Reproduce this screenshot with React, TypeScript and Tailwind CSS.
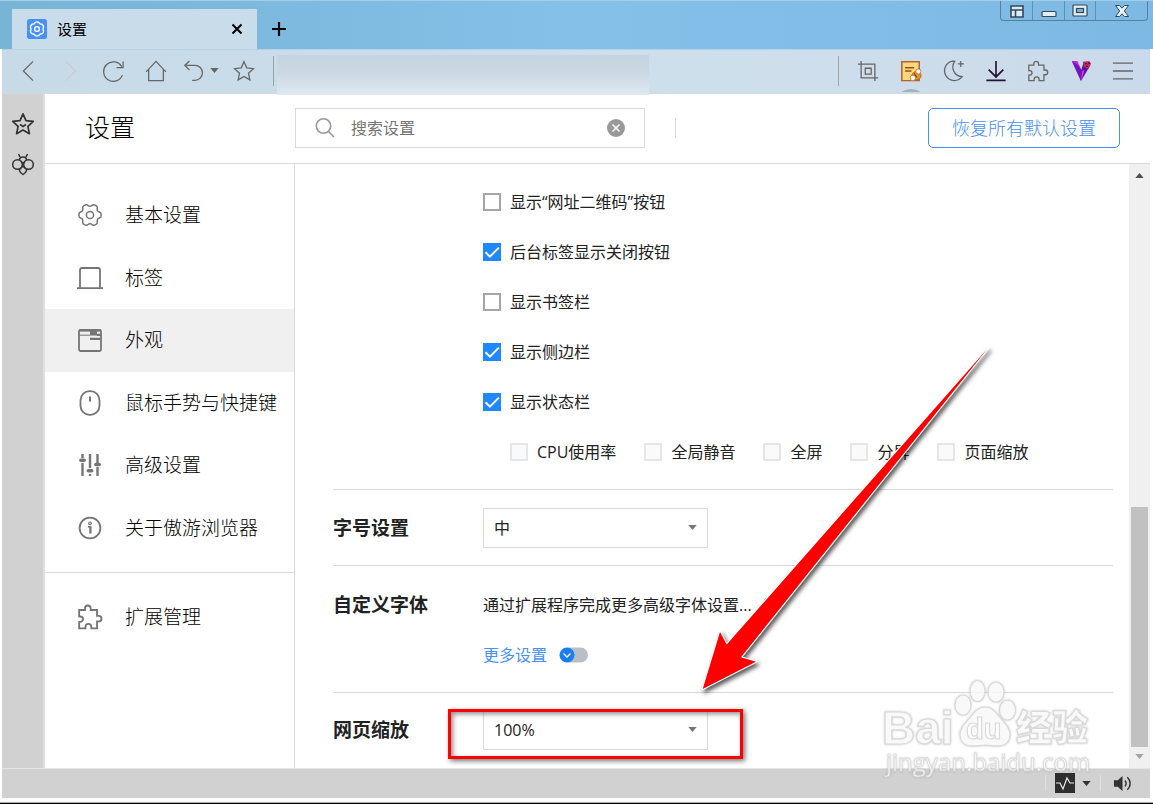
import { useState } from "react"
import type { ReactNode } from "react"

const PUZZLE = "M2 5.5h5.4V4a2.6 2.6 0 0 1 5.2 0v1.5h5.9v5.4H20a2.6 2.6 0 0 1 0 5.2h-1.5V22.5h-5.3V21a2.7 2.7 0 0 0-5.4 0v1.5H2v-6h1a2.5 2.5 0 0 0 0-5H2z"
const STAR = "M12 1.8l3 6.8 7.3.8-5.4 5 1.5 7.3L12 18l-6.4 3.7 1.5-7.3-5.4-5 7.3-.8z"

// closed outline with six flat lobes
function gear(c: number, r: number, wave: number, shift: number) {
  const points = []
  for (let i = 0; i < 120; i++) {
    const a = (i * Math.PI) / 60
    const radius = r + wave * Math.tanh(1.6 * Math.cos(6 * (a - shift)) + 0.5)
    points.push((c + radius * Math.cos(a)).toFixed(2) + " " + (c + radius * Math.sin(a)).toFixed(2))
  }
  return "M" + points.join("L") + "Z"
}

type IconProps = { children: ReactNode; size?: string; stroke?: number; box?: string }

function Icon({ children, size = "size-6", stroke = 1.5, box = "0 0 24 24" }: IconProps) {
  return (
    <svg viewBox={box} className={size + " shrink-0"} fill="none" stroke="currentColor" strokeWidth={stroke} aria-hidden="true">
      {children}
    </svg>
  )
}

function Caret({ className = "" }: { className?: string }) {
  return (
    <svg viewBox="0 0 10 6" className={"h-[5px] w-[9px] " + className} fill="currentColor" aria-hidden="true">
      <path d="M0 0h10L5 6z" />
    </svg>
  )
}

const menu = [
  {
    label: "基本设置",
    icon: <><path d={gear(13, 9.8, 1.3, 0)} /><circle cx="13" cy="13" r="3.6" /></>
  },
  {
    label: "标签",
    icon: <path d="M3 23V5q0-2 2-2h16q2 0 2 2v18M0 23.2h26" strokeWidth="1.8" />
  },
  {
    label: "外观",
    icon: <>
      <rect x="2" y="3" width="22" height="21" rx="1.5" strokeWidth="1.8" />
      <path d="M2 3.6h22" strokeWidth="2" />
      <path d="M2.5 8.2h10.500" strokeWidth="1" />
      <path d="M13 3.500h7v5h-7z" fill="currentColor" stroke="none" />
      <path d="M20 7.800h4M13 11.800h10.500" strokeWidth="2.200" />
    </>
  },
  {
    label: "鼠标手势与快捷键",
    icon: <><rect x="3.5" y="1.2" width="19" height="23.6" rx="9" strokeWidth="1.8" /><path d="M13 6.5v5" strokeWidth="2" /></>
  },
  {
    label: "高级设置",
    icon: <><path d="M5.5 2v4M5.5 11v13M13 2v14M13 22v2M20.5 2v9M20.5 15v9" strokeWidth="2.4" /><path d="M3.800 8.300h3.400M11.300 18.700h3.400M18.800 12.500h3.400" strokeWidth="3.6" strokeLinecap="round" /></>
  },
  {
    label: "关于傲游浏览器",
    icon: <><circle cx="13" cy="13" r="10.4" strokeWidth="1.8" /><circle cx="13" cy="8.300" r="1.300" strokeWidth="1.200" /><path d="M11 11.700h2V18.500M13.800 11.200v7.300" strokeWidth="1.500" /></>
  }
]

const options = [
  { label: "显示“网址二维码”按钮", checked: false },
  { label: "后台标签显示关闭按钮", checked: true },
  { label: "显示书签栏", checked: false },
  { label: "显示侧边栏", checked: true },
  { label: "显示状态栏", checked: true }
]

const statusItems = ["CPU使用率", "全局静音", "全屏", "分屏", "页面缩放"]

function Check({ label, initial = false, faded = false }: { label: string; initial?: boolean; faded?: boolean }) {
  const [checked, setChecked] = useState(initial)
  const look = faded ? "border-2 border-[#e6e6e6] bg-[#f8fafc]" : "border-2 border-[#a6a6a6] bg-white checked:border-[#2088ff] checked:bg-[#2088ff]"

  return (
    <label className="flex items-center gap-[9px] whitespace-nowrap">
      <span className="grid size-[18px]">
        <input
          type="checkbox"
          disabled={faded}
          checked={checked}
          onChange={() => setChecked(!checked)}
          className={"col-start-1 row-start-1 size-[18px] appearance-none " + look}
        />
        {checked && (
          <svg viewBox="0 0 18 18" className="pointer-events-none col-start-1 row-start-1 size-[18px]" fill="none" stroke="#fff" strokeWidth="2" aria-hidden="true">
            <path d="M2.5 9.2l4.4 4.4 9-9" />
          </svg>
        )}
      </span>
      {label}
    </label>
  )
}

function Dropdown({ id, values }: { id: string; values: string[] }) {
  return (
    <div className="relative w-[225px]">
      <select id={id} className="h-10 w-full appearance-none border border-[#d9d9d9] bg-white pl-[10px] text-base">
        {values.map(v => <option key={v}>{v}</option>)}
      </select>
      <Caret className="pointer-events-none absolute top-[17px] right-[11px] text-[#757575]" />
    </div>
  )
}

function TitleBar() {
  return (
    <div className="flex h-[49px] shrink-0 items-end border-t border-[#a3cfe8] bg-linear-to-r from-[#78b4d6] via-[#84c0e8] via-50% to-[#7db9e3] pr-[5px] pl-3">
      <div className="flex h-10 w-[245px] items-center bg-[#c9dcea] pl-[15px] pr-[13px] text-black">
        <svg viewBox="0 0 20 20" className="size-5" fill="none" stroke="#fff" strokeWidth="1.4" aria-hidden="true">
          <rect width="20" height="20" rx="2.5" fill="#4690f7" stroke="none" />
          <path d={gear(10, 6.5, 0.5, Math.PI / 6)} />
          <circle cx="10" cy="10" r="2.4" />
        </svg>
        <span className="ml-[10px] flex-1 text-[15px]">设置</span>
        <button aria-label="关闭标签">
          <Icon size="size-[14px]" stroke={2} box="0 0 14 14"><path d="M2.5 2.5l9 9M11.5 2.5l-9 9" /></Icon>
        </button>
      </div>
      <button aria-label="新标签" className="mb-3 ml-[14px] text-black">
        <Icon size="size-4" stroke={2.2} box="0 0 16 16"><path d="M8 1v14M1 8h14" /></Icon>
      </button>
      <div className="ml-auto flex h-5 divide-x divide-[#5f91b3] self-start rounded-b-[4px] border border-t-0 border-[#55819f] text-[#34495a]">
        <button aria-label="皮肤" className="grid w-8 place-items-center">
          <Icon size="size-4" stroke={1.6} box="0 0 16 16"><path d="M2 3h12v11H2zM2 7h12M6.5 7v7" fill="#dcecf6" /></Icon>
        </button>
        <button aria-label="最小化" className="grid w-8 place-items-center">
          <Icon size="size-4" stroke={1.2} box="0 0 16 16"><rect x="1" y="8.5" width="14" height="5" rx="1" fill="#e2edf4" /></Icon>
        </button>
        <button aria-label="最大化" className="grid w-[31px] place-items-center">
          <Icon size="size-4" stroke={1.2} box="0 0 16 16"><rect x="1" y="2" width="14" height="11" rx="1" fill="#e2edf4" /><rect x="4.5" y="5.5" width="7" height="4" fill="#7fb9de" /></Icon>
        </button>
        <button aria-label="关闭" className="grid w-[51px] place-items-center">
          <Icon size="size-4" stroke={1} box="0 0 16 16"><path d="M1.5 2.500h4L8 5.2l2.5-2.7h4L10.3 8l4.2 5.5h-4L8 10.8l-2.5 2.7h-4L5.700 8z" fill="#e9f1f6" /></Icon>
        </button>
      </div>
    </div>
  )
}

function Toolbar() {
  return (
    <div className="mr-[3px] ml-[2px] flex h-[45px] shrink-0 items-center border-t border-b border-t-[#b4d3ea] border-b-[#d5d9dc] bg-linear-to-r from-[#c7dae7] via-[#cedfec] via-60% to-[#cbdaea] pb-[2px] text-[#666]">
      <div className="ml-[15px] flex w-[150px] justify-between">
        <button aria-label="后退"><Icon size="size-[22px]" stroke={1.4}><path d="M17.500 1.500L7 12l10.500 10.500" /></Icon></button>
        <button aria-label="前进" className="text-[#c5ced6]"><Icon size="size-[22px]" stroke={1.2}><path d="M6.500 1.500L17 12 6.500 22.500" /></Icon></button>
        <button aria-label="刷新"><Icon size="size-[22px]" stroke={1.4}><path d="M22.300 16.500A10.600 10.600 0 1 1 21.500 7.200M23 1.500v6.700h-7" /></Icon></button>
        <button aria-label="主页"><Icon size="size-[22px]" stroke={1.4}><path d="M1.200 13L12 1.500l10.800 11.500M4 10.500v12h16v-12" /></Icon></button>
      </div>
      <button aria-label="恢复" className="ml-4 flex items-center gap-[5px]">
        <Icon size="size-[22px]" stroke={1.4}><path d="M7 1L2 5.800 7 11M2 5.800h11a8.200 8.200 0 0 1 0 16.400H10" /></Icon>
        <Caret className="w-[7px]" />
      </button>
      <button aria-label="收藏" className="ml-[14px]"><Icon size="size-[22px]" stroke={1.4}><path d={STAR} /></Icon></button>
      <div className="ml-[18px] h-[30px] w-px bg-[#9aa3aa]" />
      <input
        aria-label="地址"
        className="z-10 ml-[3px] -mb-[4px] h-10 w-[372px] self-end bg-linear-to-b from-[#c5d4e0] via-[#cbd8e4] via-45% to-[#dfe8f1] px-3 outline-none"
      />
      <div className="ml-auto h-[30px] w-px bg-[#a4a4a4]" />
      <div className="mr-4 ml-[18px] flex w-[277px] items-center justify-between">
        <button aria-label="截图"><Icon size="size-[22px]" stroke={1.4}><path d="M1 4.500h18.500V23M4.500 1v18.500H23M9 9h6.500v6.500H9z" /></Icon></button>
        <button aria-label="笔记" className="relative">
          <Icon size="size-[22px]">
            <path d="M2 2h19v20.500H2z" fill="#ffd87a" stroke="#b5622b" strokeWidth="1.600" />
            <path d="M5.500 8.500h10M5.500 12h7" stroke="#9a4d1c" />
            <ellipse cx="18" cy="17" rx="5" ry="4.500" fill="#e89518" stroke="#b5622b" strokeWidth="1" />
            <circle cx="20" cy="12.500" r="2.800" fill="#fffaf0" stroke="#b5622b" strokeWidth=".8" />
            <circle cx="14" cy="19.500" r="3" fill="#fffaf0" stroke="#b5622b" strokeWidth=".8" />
            <path d="M15.500 14.500l3 4.500" stroke="#6d3a10" strokeWidth="1.100" />
          </Icon>
          <svg viewBox="0 0 26 4" className="absolute top-[29px] -left-[2px] h-[3px] w-[26px]" aria-hidden="true">
            <path d="M0 4Q13-4 26 4z" fill="#a3b1bb" />
          </svg>
        </button>
        <button aria-label="夜间模式"><Icon size="size-[22px]" stroke={1.4}><path d="M11.500 1.200a10.700 10.700 0 1 0 10.500 17C13.500 17.500 9 9 13.800 1.400zM20.500 1v6.500M17.200 4.200h6.600" /></Icon></button>
        <button aria-label="下载" className="text-[#241334]"><Icon size="size-[22px]" stroke={1.8}><path d="M12 1v17M4 10.500l8 8 8-8M1.500 22.300h21" /></Icon></button>
        <button aria-label="扩展"><Icon size="size-[22px]" stroke={1.4}><path d={PUZZLE} /></Icon></button>
        <button aria-label="会员">
          <svg viewBox="0 0 24 24" className="size-[22px]" aria-hidden="true">
            <path d="M2 1h6l5 11-1 11z" fill="#c026e0" />
            <path d="M2 1l10 22 1-11-4-6z" fill="#7414c0" />
            <path d="M12 23l10-17-7-4-3 10z" fill="#5a10a8" />
            <path d="M12 23l4-12-3 1z" fill="#d636ee" />
            <path d="M14 2l7-1 2 3-3 6-5-3z" fill="#c22863" />
            <path d="M16.500 4h1.500M20 3.500h1.500M17.500 7h2" stroke="#2a0c28" strokeWidth="1.500" />
          </svg>
        </button>
        <button aria-label="菜单"><Icon size="size-[22px]" stroke={1.4}><path d="M1 3.500h22M1 12h22M1 20.500h22" /></Icon></button>
      </div>
    </div>
  )
}

function Header() {
  return (
    <header className="flex h-[70px] shrink-0 items-center border-b border-[#d9d9d9] pb-[2px]">
      <h1 className="w-[250px] pl-10 text-[25px] font-light text-black">设置</h1>
      <div className="flex h-10 w-[350px] items-center border border-[#d9d9d9] px-[19px] text-[#999]">
        <Icon size="size-5" stroke={1.6} box="0 0 20 20"><circle cx="8.500" cy="8" r="7.200" /><path d="M13.500 13.500l5.500 5.500" /></Icon>
        <input aria-label="搜索设置" placeholder="搜索设置" className="ml-4 min-w-0 flex-1 text-base text-[#333] outline-none placeholder:text-[#757575]" />
        <button aria-label="清除">
          <svg viewBox="0 0 18 18" className="size-[18px]" aria-hidden="true">
            <circle cx="9" cy="9" r="9" fill="#999" />
            <path d="M5.500 5.500l7 7M12.500 5.500l-7 7" stroke="#fff" strokeWidth="1.500" />
          </svg>
        </button>
      </div>
      <div className="ml-[30px] h-5 w-px bg-[#d9d9d9]" />
      <button className="mr-[30px] ml-auto h-10 w-48 rounded-[5px] border border-[#4690f7] text-lg font-light text-[#4690f7]">恢复所有默认设置</button>
    </header>
  )
}

function Sidebar() {
  const [active, setActive] = useState("外观")
  const item = "flex w-full items-center gap-[22px] pl-8 text-left text-[19px] font-light text-black "

  return (
    <nav className="w-[250px] shrink-0 border-r border-[#d9d9d9] pt-5">
      <div className="grid h-[375px] grid-rows-6">
        {menu.map(m => (
          <button key={m.label} onClick={() => setActive(m.label)} className={item + (active === m.label ? "bg-[#f0f0f0]" : "")}>
            <span className="text-[#757575]"><Icon size="size-[26px]" box="0 0 26 26">{m.icon}</Icon></span>
            {m.label}
          </button>
        ))}
      </div>
      <div className="mt-[13px] border-t border-[#d9d9d9] pt-[13px]">
        <button className={item + "h-[62px]"}>
          <span className="text-[#757575]"><Icon size="size-[26px]" stroke={1.700}><path d={PUZZLE} /></Icon></span>
          扩展管理
        </button>
      </div>
    </nav>
  )
}

function Content() {
  const heading = "w-[150px] shrink-0 text-[19px] font-bold"

  return (
    <main className="min-w-0 flex-1 overflow-hidden pt-[13px] pr-4 pl-[38px]">
      <div className="pb-3 pl-[150px]">
        {options.map(o => (
          <div key={o.label} className="flex h-[50px] items-center">
            <Check label={o.label} initial={o.checked} />
          </div>
        ))}
        <div className="flex h-[50px] items-center gap-7 pl-[27px]">
          {statusItems.map(s => <Check key={s} label={s} faded />)}
        </div>
      </div>
      <div className="flex items-center border-t border-[#d9d9d9] pt-[18px] pb-[17px]">
        <label htmlFor="font-size" className={heading}>字号设置</label>
        <Dropdown id="font-size" values={["中", "小", "大"]} />
      </div>
      <div className="flex border-t border-[#d9d9d9] pt-[14px] pb-3">
        <h2 className={heading + " leading-[50px]"}>自定义字体</h2>
        <div>
          <div className="flex h-[50px] items-center gap-[10px]">
            通过扩展程序完成更多高级字体设置...
            <Icon size="size-[18px]" stroke={1.2}><circle cx="12" cy="12" r="11" stroke="#4690f7" /></Icon>
          </div>
          <div className="flex h-[50px] items-center gap-3">
            <a href="#" className="text-[#4690f7]">更多设置</a>
            <svg viewBox="0 0 29 16" className="h-4 w-[29px]" fill="none" aria-hidden="true">
              <rect x="3" y=".5" width="26" height="15" rx="7.500" fill="#babec6" />
              <circle cx="8" cy="8" r="7.500" fill="#1a7df0" />
              <path d="M4.500 6.500L8 10l3.500-3.500" stroke="#fff" strokeWidth="1.300" />
            </svg>
          </div>
        </div>
      </div>
      <div className="flex items-center border-t border-[#d9d9d9] pt-[17px]">
        <label htmlFor="zoom" className={heading}>网页缩放</label>
        <div className="relative">
          <Dropdown id="zoom" values={["100%", "125%", "150%"]} />
          <div className="pointer-events-none absolute -top-px -right-[35px] -bottom-[9px] -left-[35px] border-[3px] border-[#fe0000] shadow-[2px_2px_5px_rgba(0,0,0,0.55),inset_2px_2px_5px_rgba(0,0,0,0.45)]" />
        </div>
      </div>
    </main>
  )
}

function Scrollbar() {
  return (
    <div className="flex w-[21px] shrink-0 flex-col items-center bg-[#f0f0f0] pt-[9px] pb-[9px]">
      <Caret className="rotate-180 text-[#505050]" />
      <div className="mt-auto h-60 w-[17px] bg-[#c1c1c1]" />
      <Caret className="mt-[7px] text-[#a3a3a3]" />
    </div>
  )
}

function StatusBar() {
  return (
    <footer className="mr-[3px] ml-[2px] flex h-[30px] shrink-0 items-center justify-end border-t border-[#e4e4e4] bg-[#d1d1d1] pr-[18px] pb-px text-[#333]">
      <div className="h-4 w-px bg-[#e2e2e2]" />
      <button aria-label="性能" className="ml-[9px] flex items-center gap-[7px]">
        <svg viewBox="0 0 20 20" className="size-5" aria-hidden="true">
          <rect width="20" height="20" fill="#2e2e2e" />
          <path d="M1 10h4l3 6 4-11 3 5h4" fill="none" stroke="#e8e8e8" strokeWidth="1.200" />
        </svg>
        <Caret />
      </button>
      <div className="ml-[9px] h-4 w-px bg-[#e2e2e2]" />
      <button aria-label="静音" className="ml-3">
        <svg viewBox="0 0 20 20" className="size-[19px]" fill="none" stroke="currentColor" strokeWidth="1.500" aria-hidden="true">
          <path d="M1 6.500h4L10 2v16l-5-4.500H1z" fill="currentColor" stroke="none" />
          <path d="M12.500 7a4 4 0 0 1 0 6M15 3.500a8.500 8.500 0 0 1 0 13" />
        </svg>
      </button>
    </footer>
  )
}

function Arrow() {
  return (
    <svg viewBox="0 0 300 360" className="pointer-events-none absolute top-[340px] left-[698px] h-[360px] w-[300px] drop-shadow-[2px_3px_2px_rgba(0,0,0,0.65)]" aria-hidden="true">
      <path d="M290 8L28.700 304.500 22 292 4.700 349 58 321.700 43 317.300z" fill="#fe0000" stroke="#fff" strokeWidth="2.400" strokeLinejoin="round" paintOrder="stroke" />
    </svg>
  )
}

function Watermark() {
  return (
    <svg viewBox="0 0 220 110" className="pointer-events-none absolute right-[53px] bottom-[20px] h-[110px] w-[220px] drop-shadow-[0_0_1px_rgba(0,0,0,0.2)]" fill="#fff" fillOpacity=".85" stroke="#d9d9d9" strokeWidth="1.200" aria-hidden="true">
      <ellipse cx="97.500" cy="18" rx="7.500" ry="10.500" />
      <ellipse cx="116" cy="19" rx="8" ry="10" />
      <ellipse cx="83" cy="32" rx="8" ry="10" />
      <ellipse cx="127.500" cy="37" rx="8" ry="10" />
      <path d="M105 34c9 0 12 8 18 14s9 12 6 19c-4 8-14 6-24 5-10 1-20 3-24-5-3-7 0-13 6-19s9-14 18-14z" />
      <g fontFamily="'Liberation Sans', sans-serif" fontWeight="bold">
        <text x="2" y="71" fontSize="46">Bai</text>
        <text x="86" y="66" fontSize="29">du</text>
      </g>
      <text x="136" y="68" fontSize="36" fontWeight="900" fontFamily="'Noto Sans CJK SC', sans-serif">经验</text>
      <text x="6" y="98" fontSize="24" fontFamily="'Open Sans', sans-serif" strokeWidth=".8">jingyan.baidu.com</text>
    </svg>
  )
}

function App() {
  return (
    <div className="relative flex h-screen flex-col overflow-hidden border-b border-black bg-white font-['Open_Sans','Noto_Sans_CJK_SC',sans-serif] text-base text-[#222]">
      <TitleBar />
      <Toolbar />
      <div className="mr-[3px] ml-[2px] flex min-h-0 flex-1">
        <aside className="flex w-[43px] shrink-0 flex-col items-center gap-4 border-r-2 border-[#e0e0e0] bg-[#d1d1d1] pt-[18px] text-[#333]">
          <button aria-label="收藏夹"><Icon stroke={1.700}><path d={STAR} strokeLinejoin="round" /><path d="M9 12.500l3 2 3-2" /></Icon></button>
          <button aria-label="蜜蜂">
            <Icon stroke={1.500}>
              <path d="M7.500 2l1.500 3M16.500 2l-1.500 3M8.500 8c0-4 7-4 7 0M8.500 17c-.5 2 2 4.500 3.500 5.500 1.500-1 4-3.500 3.500-5.500" />
              <circle cx="6.500" cy="12.500" r="4.800" />
              <circle cx="17.500" cy="12.500" r="4.800" />
              <path d="M10 9.500l2 2 2-2M9 17l3-3 3 3" />
            </Icon>
          </button>
        </aside>
        <div className="flex min-w-0 flex-1 flex-col">
          <Header />
          <div className="flex min-h-0 flex-1">
            <Sidebar />
            <Content />
            <Scrollbar />
          </div>
        </div>
      </div>
      <StatusBar />
      <div className="h-[5px] shrink-0 border-b border-[#a8a8a8]" />
      <Arrow />
      <Watermark />
    </div>
  )
}

export default App
